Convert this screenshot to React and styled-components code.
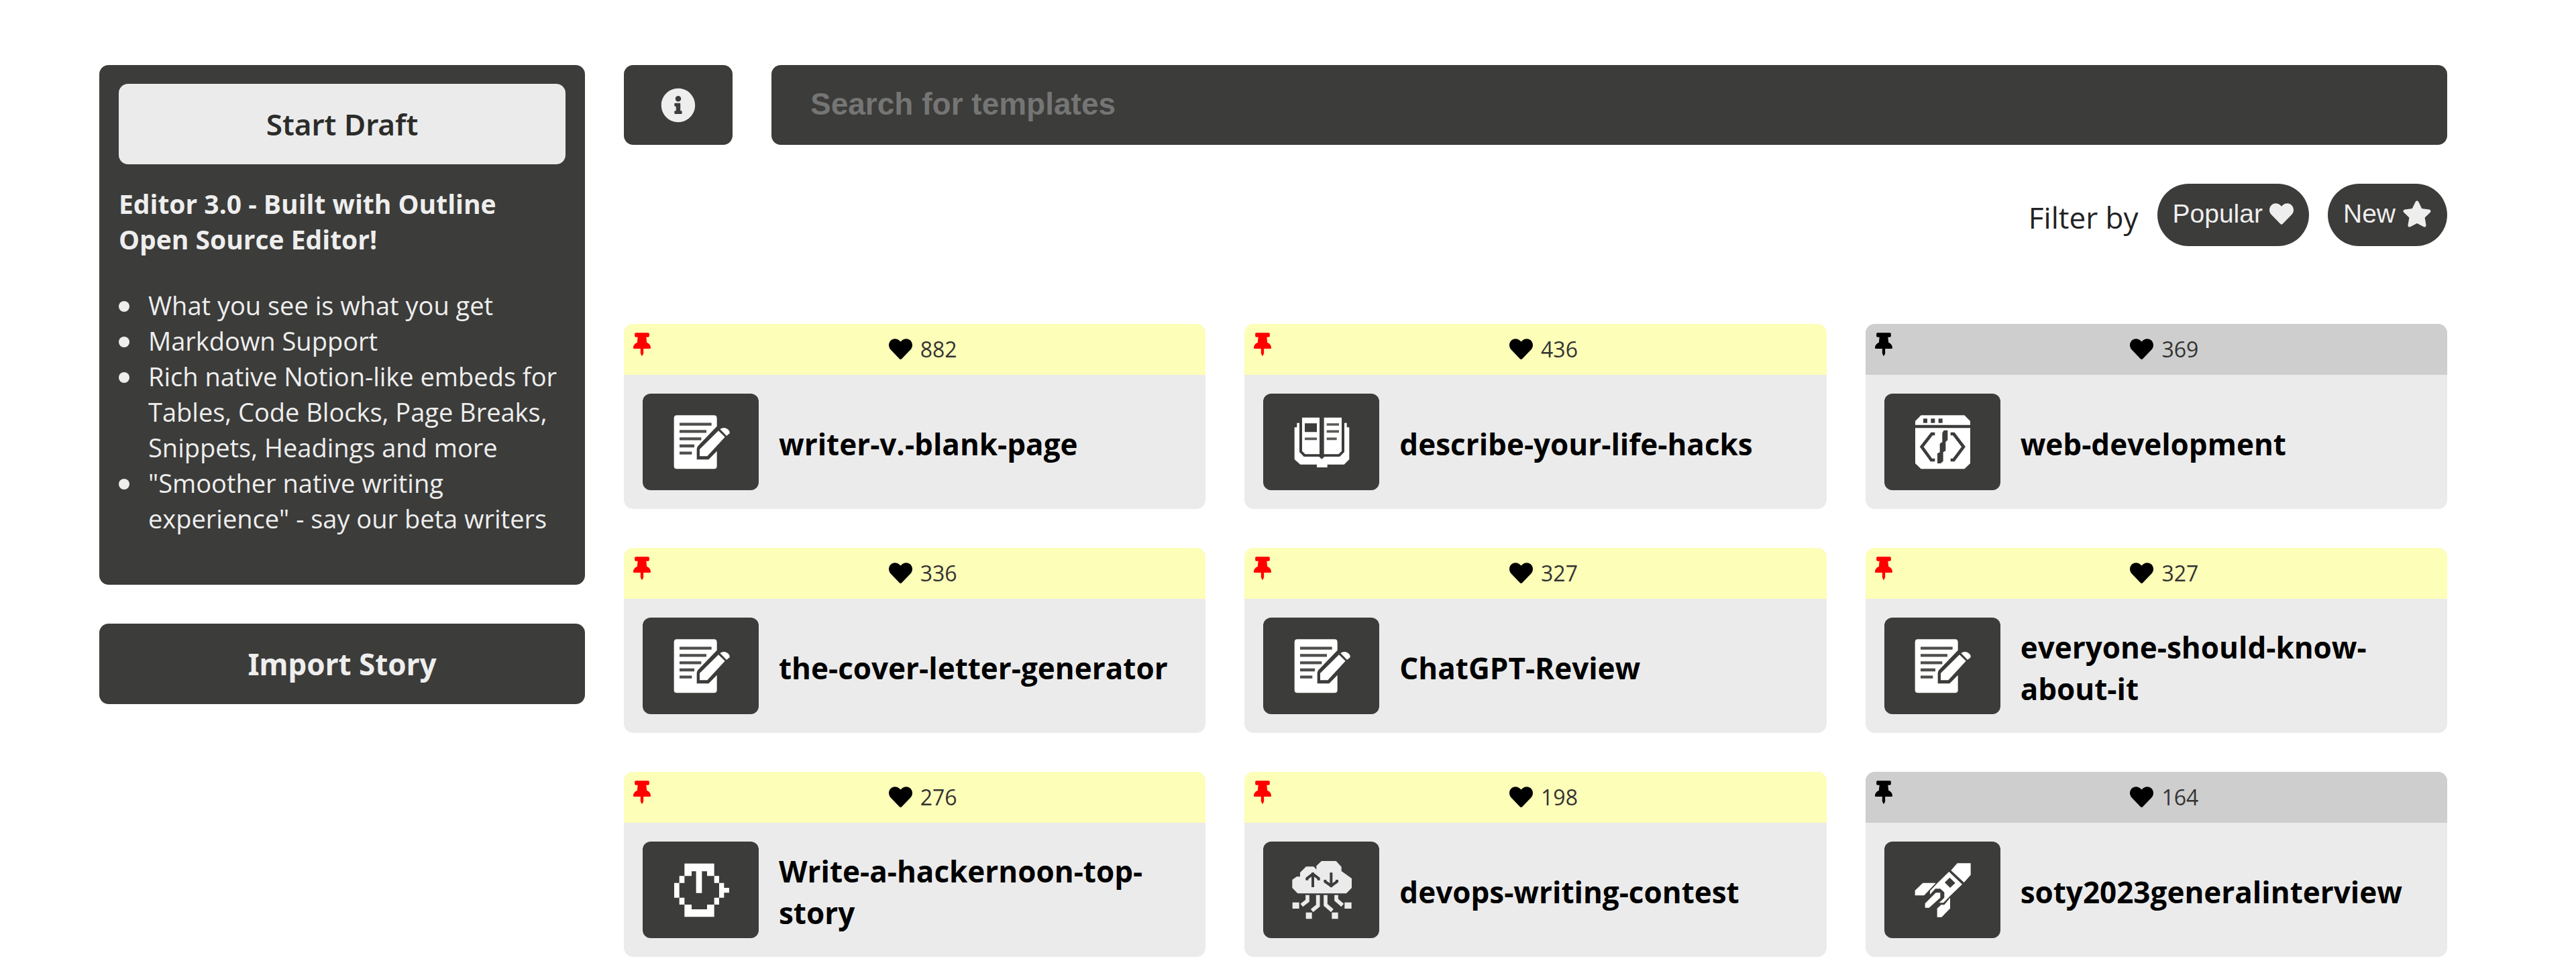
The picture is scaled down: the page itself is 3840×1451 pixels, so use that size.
import React, { useState } from 'react';
import styled, { createGlobalStyle } from 'styled-components';
import { FaHeart, FaInfoCircle, FaStar, FaThumbtack } from 'react-icons/fa';

const GlobalStyle = createGlobalStyle`
  * {
    box-sizing: border-box;
  }
  body {
    margin: 0;
    background: #fff;
    color: #000;
    font-family: 'Open Sans', 'Noto Sans', sans-serif;
  }
  button {
    border: none;
    cursor: pointer;
  }
`;

const Page = styled.div`
  display: flex;
  align-items: flex-start;
  gap: 58px;
  padding: 97px 192px 22px 148px;
`;

const Sidebar = styled.aside`
  display: flex;
  flex: 0 0 724px;
  flex-direction: column;
  gap: 58px;
`;

const DraftBox = styled.section`
  padding: 28px 29px 72px;
  border-radius: 14px;
  background: #3c3c3a;
  color: #eee;
  font-size: 38px;
  line-height: 53px;
`;

const SideButton = styled.button`
  display: block;
  width: 100%;
  height: 120px;
  border-radius: 14px;
  background: ${(props) => (props.$light ? '#ebebeb' : '#3c3c3a')};
  color: ${(props) => (props.$light ? '#2c2c2a' : '#eee')};
  font-family: 'Noto Sans', sans-serif;
  font-size: 44px;
  font-weight: ${(props) => (props.$light ? 600 : 700)};
`;

const DraftTitle = styled.h2`
  margin: 32px 0 46px;
  font-size: 39px;
  font-weight: 700;
  line-height: 53px;
`;

const Features = styled.ul`
  margin: 0;
  padding: 0;
  list-style: none;
`;

const Feature = styled.li`
  display: flex;
  &::before {
    content: '';
    flex: 0 0 16px;
    height: 16px;
    margin: 20px 28px 0 0;
    border-radius: 50%;
    background: #eee;
  }
`;

const Main = styled.main`
  flex: 1;
  min-width: 0;
`;

const TopBar = styled.div`
  display: flex;
  gap: 58px;
`;

const InfoButton = styled.button`
  display: flex;
  align-items: center;
  justify-content: center;
  width: 162px;
  height: 119px;
  border-radius: 14px;
  background: #3c3c3a;
  color: #eee;
`;

const SearchInput = styled.input`
  flex: 1;
  min-width: 0;
  height: 119px;
  padding: 0 58px 4px;
  border: none;
  border-radius: 14px;
  background: #3c3c3a;
  color: #eee;
  font-family: 'Liberation Sans', sans-serif;
  font-size: 46px;
  font-weight: 700;
  &::placeholder {
    color: #757575;
    opacity: 1;
  }
`;

const Filters = styled.div`
  display: flex;
  align-items: center;
  justify-content: flex-end;
  gap: 28px;
  margin-top: 58px;
`;

const FilterLabel = styled.span`
  padding-top: 6px;
  color: #222;
  font-size: 44px;
`;

const Pill = styled.button`
  display: flex;
  align-items: center;
  gap: 10px;
  height: 93px;
  padding: 0 23px 4px;
  border-radius: 48px;
  background: #3c3c3a;
  color: #eee;
  font-family: 'Liberation Sans', sans-serif;
  font-size: 39px;
`;

const Grid = styled.div`
  display: grid;
  grid-template-columns: repeat(3, 1fr);
  gap: 58px;
  margin-top: 116px;
`;

const Card = styled.a`
  position: relative;
  display: block;
  overflow: hidden;
  border-radius: 14px;
  background: #ebebeb;
  color: #000;
  text-decoration: none;
`;

const CardHead = styled.div`
  display: flex;
  align-items: center;
  justify-content: center;
  gap: 12px;
  height: 76px;
  padding: 0 0 2px 24px;
  background: ${(props) => (props.$pinned ? '#fdfeb8' : '#cecece')};
`;

const Pin = styled(FaThumbtack)`
  position: absolute;
  top: 13px;
  left: 14px;
  width: 26px;
  height: 35px;
  color: ${(props) => (props.$pinned ? '#f00' : '#000')};
`;

const Count = styled.span`
  color: #333;
  font-size: 32px;
`;

const CardBody = styled.div`
  display: flex;
  align-items: center;
  gap: 30px;
  padding: 28px;
`;

const Tile = styled.div`
  display: flex;
  flex: 0 0 173px;
  align-items: center;
  justify-content: center;
  height: 144px;
  border-radius: 12px;
  background: #3c3c3a;
`;

const Glyph = styled.svg`
  width: 96px;
  height: 96px;
  fill: ${(props) => (props.$soft ? '#ebebeb' : '#fff')};
`;

const CardTitle = styled.h3`
  margin: 0;
  padding-top: 6px;
  font-size: 44px;
  font-weight: 700;
  line-height: 62px;
`;

const DocIcon = () => (
  <Glyph viewBox="28 24 288 288">
    <path d="M64 49H230Q243 49 243 62V98L158 187Q153 194 153 202V247H206L243 209V276Q243 289 230 289H64Q51 289 51 276V62Q51 49 64 49Z" />
    <path d="M76 89H219M76 121H196M76 154H173M76 186H142M76 218H131" stroke="#4e4e4c" strokeWidth="13" fill="none" />
    <path d="M166 201L250 118L279 146L200 232H166Z" />
    <path d="M257 111Q272 100 286 108Q302 116 300 130L286 141Z" />
  </Glyph>
);

const BookIcon = () => (
  <Glyph viewBox="157 123 288 288">
    <path d="M214 158H292V322H228L214 308ZM312 158H391V308L377 322H312Z" />
    <path d="M191 182H202V312L222 333H290L302 344L314 333H382L403 312V182H414V202H425V345L402 368H327V381H280V368H206L180 345V202H191Z" />
    <path d="M226 184H280V223H226Z" fill="#3c3c3a" />
    <path d="M226 253H280M324 189H379M324 220H379M324 253H369" stroke="#5a5a58" strokeWidth="11" fill="none" />
  </Glyph>
);

const CodeIcon = () => (
  <Glyph viewBox="172 124 288 288">
    <path d="M222 149H416L442 175V192H196V175ZM196 206H442V364L416 389H222L196 364Z" />
    <path d="M232 164H250V183H232ZM266 164H284V183H266ZM300 164H318V183H300Z" fill="#3c3c3a" />
    <path
      d="M284 232H270L225 290L268 349H284M354 232H368L412 290L368 349H354"
      stroke="#3c3c3a"
      strokeWidth="14"
      fill="none"
    />
    <path d="M324 216H341V260L332 268V308L321 314V354L310 364H295V320L306 314V276L317 268V228Z" fill="#3c3c3a" />
  </Glyph>
);

const WatchIcon = () => (
  <Glyph viewBox="170 123 288 288">
    <path d="M240 149H373V205H395V236H417V258H440V280H417V302H395V333H373V388H240V333H217V302H194V236H217V205H240ZM272 184V205H240V236H217V302H240V333H272V354H341V333H373V302H395V236H373V205H341V184H318V281H292V184Z" />
  </Glyph>
);

const CloudIcon = () => (
  <Glyph $soft viewBox="157 123 288 288">
    <path d="M301 138H366L390 164V183L436 216V258L412 283H194L170 258V222L190 208H205V190L232 163H266L278 176V160Z" />
    <path
      d="M262 190V255M236 224V216L262 196L288 216V224M344 190V255M317 222V230L344 249L370 230V222"
      stroke="#3c3c3a"
      strokeWidth="12"
      fill="none"
    />
    <path
      d="M238 290V316L212 336M285 290V338L258 360M319 290V334L349 360M367 290V312L395 336"
      stroke="#ebebeb"
      strokeWidth="17"
      fill="none"
    />
    <path d="M171 323H201V351H171ZM404 323H435V351H404ZM231 368H258V397H231ZM347 368H375V397H347Z" />
  </Glyph>
);

const RocketIcon = () => (
  <Glyph viewBox="172 123 288 288">
    <path d="M384 148H444V200L414 234L356 180Z" />
    <path
      d="M347 186L406 242L352 294L322 325H303L326 302V278L308 262H286L262 288V272L294 238ZM350 212L328 234L352 258L375 236Z"
      fillRule="evenodd"
    />
    <path d="M230 236H288L236 292H195V270ZM352 302V350L314 389H294V350L312 334H326ZM288 280H308V302L258 347H240V328Z" />
  </Glyph>
);

const templates = [
  { title: 'writer-v.-blank-page', likes: 882, pinned: true, Icon: DocIcon },
  { title: 'describe-your-life-hacks', likes: 436, pinned: true, Icon: BookIcon },
  { title: 'web-development', likes: 369, pinned: false, Icon: CodeIcon },
  { title: 'the-cover-letter-generator', likes: 336, pinned: true, Icon: DocIcon },
  { title: 'ChatGPT-Review', likes: 327, pinned: true, Icon: DocIcon },
  { title: 'everyone-should-know-about-it', likes: 327, pinned: true, Icon: DocIcon },
  { title: 'Write-a-hackernoon-top-story', likes: 276, pinned: true, Icon: WatchIcon },
  { title: 'devops-writing-contest', likes: 198, pinned: true, Icon: CloudIcon },
  { title: 'soty2023generalinterview', likes: 164, pinned: false, Icon: RocketIcon },
];

function TemplateCard({ title, likes, pinned, Icon }) {
  return (
    <Card href={`#${title}`}>
      <Pin $pinned={pinned} />
      <CardHead $pinned={pinned}>
        <FaHeart size={35} />
        <Count>{likes}</Count>
      </CardHead>
      <CardBody>
        <Tile>
          <Icon />
        </Tile>
        <CardTitle>{title}</CardTitle>
      </CardBody>
    </Card>
  );
}

function App() {
  const [query, setQuery] = useState('');

  return (
    <>
      <GlobalStyle />
      <Page>
        <Sidebar>
          <DraftBox>
            <SideButton $light type="button">
              Start Draft
            </SideButton>
            <DraftTitle>Editor 3.0 - Built with Outline Open Source Editor!</DraftTitle>
            <Features>
              <Feature>What you see is what you get</Feature>
              <Feature>Markdown Support</Feature>
              <Feature>
                Rich native Notion-like embeds for Tables, Code Blocks, Page Breaks, Snippets, Headings and more
              </Feature>
              <Feature>"Smoother native writing experience" - say our beta writers</Feature>
            </Features>
          </DraftBox>
          <SideButton type="button">Import Story</SideButton>
        </Sidebar>
        <Main>
          <TopBar>
            <InfoButton type="button" aria-label="About templates">
              <FaInfoCircle size={52} />
            </InfoButton>
            <SearchInput
              type="text"
              aria-label="Search for templates"
              placeholder="Search for templates"
              value={query}
              onChange={(e) => setQuery(e.target.value)}
            />
          </TopBar>
          <Filters>
            <FilterLabel>Filter by</FilterLabel>
            <Pill type="button">
              Popular <FaHeart size={36} />
            </Pill>
            <Pill type="button">
              New <FaStar size={44} />
            </Pill>
          </Filters>
          <Grid>
            {templates.map((item) => (
              <TemplateCard key={item.title} {...item} />
            ))}
          </Grid>
        </Main>
      </Page>
    </>
  );
}

export default App;
